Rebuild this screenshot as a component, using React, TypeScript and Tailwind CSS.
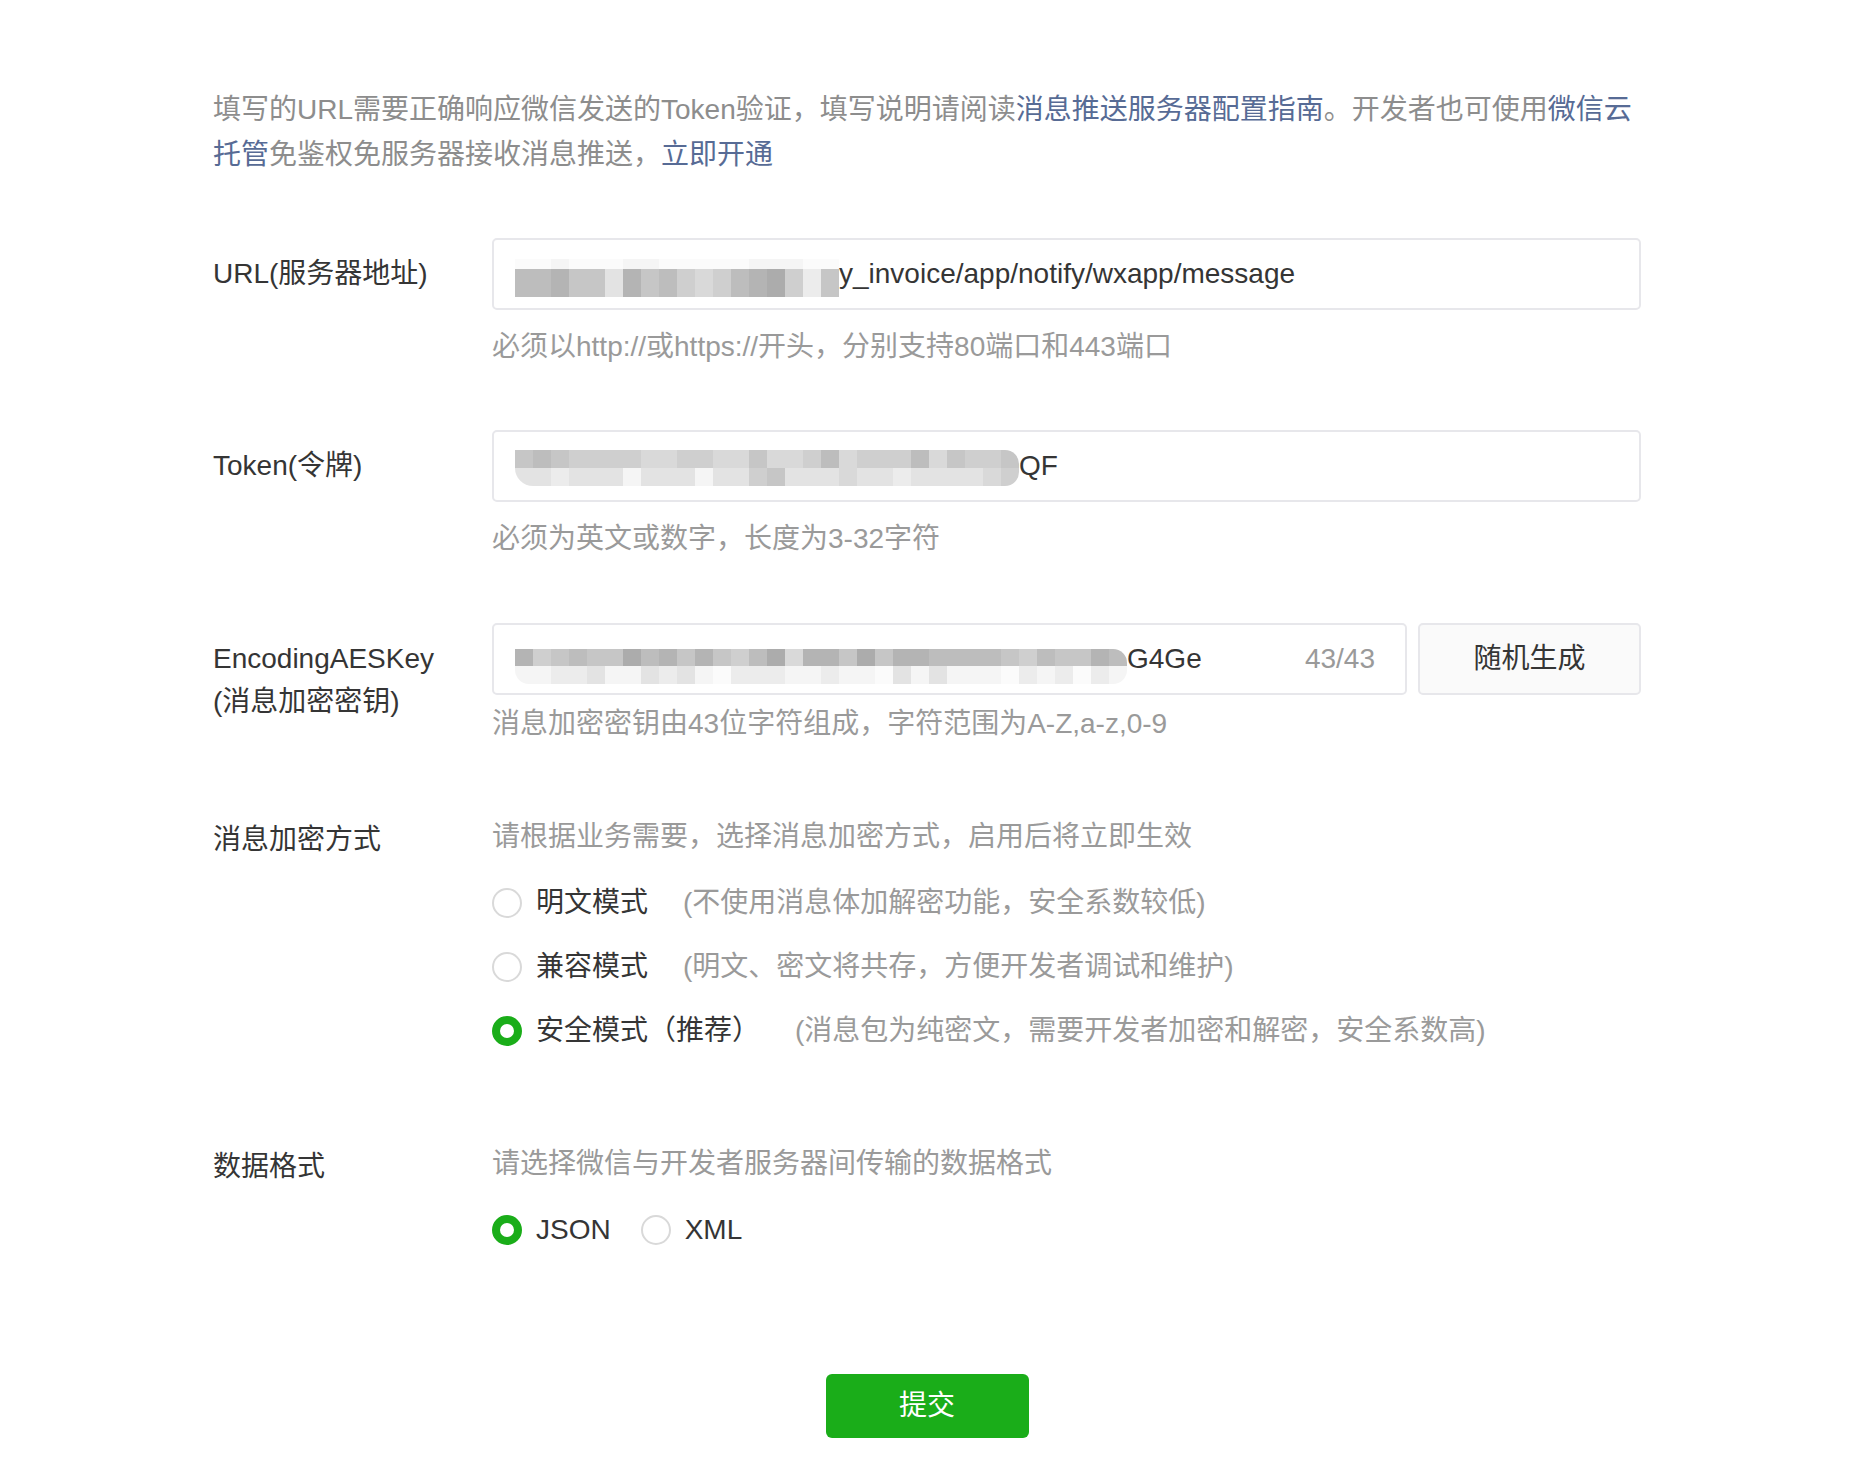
import React, { useState } from 'react';

const font = 'font-["Liberation_Sans","Noto_Sans_CJK_SC",sans-serif]';

const shade: Record<string, string> = {
  '0': 'bg-[#acacac]',
  '1': 'bg-[#b4b4b4]',
  '2': 'bg-[#bdbdbd]',
  '3': 'bg-[#c6c6c6]',
  '4': 'bg-[#cfcfcf]',
  '5': 'bg-[#d9d9d9]',
  '6': 'bg-[#e3e3e3]',
  '7': 'bg-[#ececec]',
  '8': 'bg-[#f5f5f5]',
  '9': 'bg-[#fbfbfb]',
};

// blurred-out secret text, drawn as a mosaic of grey cells
function Mosaic({ rows, cell, heights, className }: { rows: string[]; cell: string; heights: string[]; className?: string }) {
  return (
    <div className={`flex flex-col overflow-hidden shrink-0 ${className || ''}`}>
      {rows.map((r, i) => (
        <div key={i} className={`flex ${heights[i]}`}>
          {r.split('').map((c, j) => (
            <div key={j} className={`${cell} h-full ${shade[c]}`} />
          ))}
        </div>
      ))}
    </div>
  );
}

function Radio({ checked, onClick, children }: { checked: boolean; onClick: () => void; children: React.ReactNode }) {
  return (
    <label onClick={onClick} className="flex items-center cursor-pointer">
      <span
        className={`w-[30px] h-[30px] rounded-full shrink-0 ${checked ? 'border-[8px] border-[#1aad19] bg-white' : 'border-2 border-[#d9d9d9] bg-white'}`}
      />
      {children}
    </label>
  );
}

export default function App() {
  const [mode, setMode] = useState('safe');
  const [format, setFormat] = useState('json');

  const modes = [
    { id: 'plain', label: '明文模式', desc: '(不使用消息体加解密功能，安全系数较低)' },
    { id: 'compat', label: '兼容模式', desc: '(明文、密文将共存，方便开发者调试和维护)' },
    { id: 'safe', label: '安全模式（推荐）', desc: '(消息包为纯密文，需要开发者加密和解密，安全系数高)' },
  ];

  return (
    <div className={`min-h-screen bg-white ${font} text-[28px] text-[#353535]`}>
      <div className="w-[1428px] ml-[213px] pt-[87px] pb-[40px]">
        <p className="leading-[45px] text-[#8d8d8d] whitespace-nowrap">
          填写的URL需要正确响应微信发送的Token验证，填写说明请阅读<a className="text-[#576b95] cursor-pointer">消息推送服务器配置指南</a>。开发者也可使用<a className="text-[#576b95] cursor-pointer">微信云</a>
          <br />
          <a className="text-[#576b95] cursor-pointer">托管</a>免鉴权免服务器接收消息推送，<a className="text-[#576b95] cursor-pointer">立即开通</a>
        </p>

        {/* URL */}
        <div className="flex mt-[61px]">
          <div className="w-[279px] shrink-0 pt-[14px] leading-[43px]">URL(服务器地址)</div>
          <div className="flex-1">
            <div className="h-[72px] border-2 border-[#e7e7eb] rounded-[5px] flex items-center pl-[21px] overflow-hidden">
              <Mosaic
                className="mt-[8px]"
                rows={['998999889999988899', '221336132454210473']}
                heights={['h-[10px]', 'h-[28px]']}
                cell="w-[18px]"
              />
              <span className="whitespace-nowrap">y_invoice/app/notify/wxapp/message</span>
            </div>
            <div className="mt-[15px] leading-[44px] text-[#9a9a9a]">必须以http://或https://开头，分别支持80端口和443端口</div>
          </div>
        </div>

        {/* Token */}
        <div className="flex mt-[61px]">
          <div className="w-[279px] shrink-0 pt-[14px] leading-[43px]">Token(令牌)</div>
          <div className="flex-1">
            <div className="h-[72px] border-2 border-[#e7e7eb] rounded-[5px] flex items-center pl-[21px] overflow-hidden">
              <Mosaic
                className="mt-[4px] rounded-bl-[18px] rounded-r-[14px]"
                rows={['3234444554455355425444253443', '6676668666866436665667666654']}
                heights={['h-[18px]', 'h-[18px]']}
                cell="w-[18px]"
              />
              <span className="whitespace-nowrap">QF</span>
            </div>
            <div className="mt-[15px] leading-[44px] text-[#9a9a9a]">必须为英文或数字，长度为3-32字符</div>
          </div>
        </div>

        {/* EncodingAESKey */}
        <div className="flex mt-[62px]">
          <div className="w-[279px] shrink-0 pt-[14px] leading-[43px]">
            EncodingAESKey
            <br />
            (消息加密密钥)
          </div>
          <div className="flex-1">
            <div className="flex gap-[11px]">
              <div className="flex-1 h-[72px] border-2 border-[#e7e7eb] rounded-[5px] flex items-center pl-[21px] pr-[30px] overflow-hidden">
                <Mosaic
                  className="mt-[14px] rounded-bl-[14px] rounded-r-[14px]"
                  rows={['1432330213134205113031122223423312', '8877688676897778878896868889787978']}
                  heights={['h-[17px]', 'h-[18px]']}
                  cell="w-[18px]"
                />
                <span className="whitespace-nowrap">G4Ge</span>
                <span className="ml-auto text-[#9a9a9a]">43/43</span>
              </div>
              <button className="w-[223px] h-[72px] border-2 border-[#e7e7eb] rounded-[5px] bg-[#fafafa] text-[#353535] text-[28px] cursor-pointer">
                随机生成
              </button>
            </div>
            <div className="mt-[7px] leading-[44px] text-[#9a9a9a]">消息加密密钥由43位字符组成，字符范围为A-Z,a-z,0-9</div>
          </div>
        </div>

        {/* 消息加密方式 */}
        <div className="flex mt-[69px]">
          <div className="w-[279px] shrink-0 pt-[3px] leading-[44px]">消息加密方式</div>
          <div className="flex-1">
            <div className="leading-[44px] text-[#9a9a9a]">请根据业务需要，选择消息加密方式，启用后将立即生效</div>
            <div className="mt-[12px]">
              {modes.map(m => (
                <div key={m.id} className="h-[64px] flex items-center">
                  <Radio checked={mode === m.id} onClick={() => setMode(m.id)}>
                    <span className="ml-[14px] whitespace-nowrap">{m.label}</span>
                    <span className="ml-[35px] text-[#9a9a9a] whitespace-nowrap">{m.desc}</span>
                  </Radio>
                </div>
              ))}
            </div>
          </div>
        </div>

        {/* 数据格式 */}
        <div className="flex mt-[79px]">
          <div className="w-[279px] shrink-0 pt-[3px] leading-[44px]">数据格式</div>
          <div className="flex-1">
            <div className="leading-[44px] text-[#9a9a9a]">请选择微信与开发者服务器间传输的数据格式</div>
            <div className="mt-[12px] h-[64px] flex items-center gap-[30px]">
              <Radio checked={format === 'json'} onClick={() => setFormat('json')}>
                <span className="ml-[14px]">JSON</span>
              </Radio>
              <Radio checked={format === 'xml'} onClick={() => setFormat('xml')}>
                <span className="ml-[14px]">XML</span>
              </Radio>
            </div>
          </div>
        </div>

        <div className="mt-[112px] flex justify-center">
          <button className="w-[203px] h-[64px] rounded-[6px] bg-[#1aad19] text-white text-[28px] cursor-pointer">提交</button>
        </div>
      </div>
    </div>
  );
}
